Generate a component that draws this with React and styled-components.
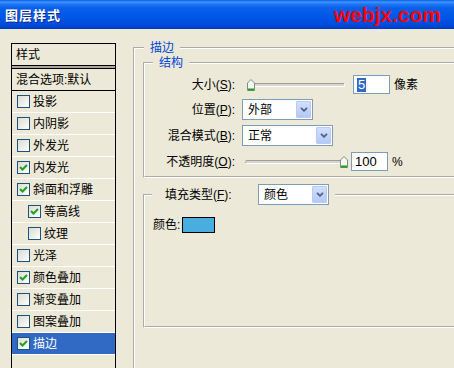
import React from 'react';
import styled, { createGlobalStyle } from 'styled-components';

const GlobalStyle = createGlobalStyle`
  html, body {
    margin: 0;
    padding: 0;
    width: 454px;
    height: 368px;
    overflow: hidden;
    background: #ECE9D8;
  }
  body {
    font-family: "Liberation Sans", "Noto Sans CJK SC", sans-serif;
    font-size: 12px;
    color: #000;
  }
`;

const Window = styled.div`
  width: 454px;
  height: 368px;
  display: flex;
  flex-direction: column;
  background: #ECE9D8;
  overflow: hidden;
`;

const TitleBar = styled.div`
  height: 29px;
  flex: none;
  display: flex;
  align-items: center;
  justify-content: space-between;
  padding: 0 13px 0 5px;
  background: linear-gradient(#0A5DE8 0, #3D95FF 2px, #2277F4 4px, #0860EA 8px, #0055E5 18px, #004BDA 25px, #003AC2 29px);
`;

const Title = styled.div`
  color: #fff;
  font: bold 13px "Noto Sans CJK SC", sans-serif;
  line-height: 16px;
  text-shadow: 1px 1px 0 #0B2A8C;
  letter-spacing: 1px;
`;

const Brand = styled.div`
  color: #FF0000;
  font: bold 21px "Liberation Sans", Arial, sans-serif;
  line-height: 24px;
  margin-top: 1px;
`;

const Body = styled.div`
  flex: 1;
  min-height: 0;
  display: flex;
  align-items: flex-start;
  padding: 14px 0 0 11px;
  gap: 17px;
`;

/* left style list */
const StyleList = styled.div`
  width: 105px;
  flex: none;
  align-self: stretch;
  box-sizing: border-box;
  border: 1px solid #000;
  border-bottom: none;
`;

const ListHeader = styled.div`
  height: 21px;
  display: flex;
  align-items: center;
  padding-left: 4px;
  line-height: 14px;
  border-bottom: ${p => (p.$closed ? '1px solid #000' : 'none')};
`;

const HeaderRule = styled.div`
  height: 2px;
  background: #ACA899;
  border-top: 1px solid #000;
  border-bottom: 1px solid #000;
`;

const Row = styled.div`
  height: 21px;
  display: flex;
  align-items: center;
  gap: 3px;
  padding-left: ${p => (p.$indent ? 16 : 5)}px;
  border-bottom: 1px solid #fff;
  line-height: 14px;
  background: ${p => (p.$selected ? '#316AC5' : 'transparent')};
  color: ${p => (p.$selected ? '#fff' : '#000')};
`;

const Box = styled.span`
  width: 13px;
  height: 13px;
  box-sizing: border-box;
  border: 1px solid #1C5180;
  background: linear-gradient(135deg, #DCDCD5 0%, #F4F4F0 70%, #fff 100%);
  display: flex;
  align-items: center;
  justify-content: center;
  flex: none;
`;

const Check = ({ on }) => (
  <Box>
    {on && (
      <svg width="9" height="9" viewBox="0 0 9 9">
        <path d="M1 4 L3.5 6.5 L8 2" fill="none" stroke="#21A121" strokeWidth="2" />
      </svg>
    )}
  </Box>
);

/* right panel */
const Group = styled.fieldset`
  margin: ${p => p.$margin || 0};
  padding: ${p => p.$pad || 0};
  border: 2px groove #fff;
  min-width: 0;
  width: ${p => p.$w}px;
  box-sizing: border-box;
  flex: none;
`;

const Legend = styled.legend`
  color: ${p => p.$color || '#0046D5'};
  padding: 0 6px;
  margin-left: ${p => p.$ml}px;
  line-height: 14px;
  display: ${p => (p.$flex ? 'flex' : 'block')};
  align-items: center;
`;

const Rows = styled.div`
  display: flex;
  flex-direction: column;
  gap: 5px;
  padding: 5px 0 5px;
`;

const FormRow = styled.div`
  display: flex;
  align-items: center;
  height: ${p => p.$h}px;
  margin-top: ${p => p.$mt || 0}px;
`;

const Label = styled.div`
  width: 90px;
  text-align: right;
  margin-right: 7px;
  white-space: nowrap;
  line-height: 14px;
`;

const SliderWrap = styled.div`
  position: relative;
  width: 98px;
  height: 19px;
  margin-left: ${p => p.$ml}px;
  display: flex;
  align-items: center;
`;

const Track = styled.div`
  width: 100%;
  height: 2px;
  border-radius: 2px;
  border-top: 1px solid #9D9D9D;
  border-bottom: 1px solid #fff;
  border-left: 1px solid #B5B5B5;
  border-right: 1px solid #fff;
  background: #D8D5CC;
`;

const Thumb = styled.svg`
  position: absolute;
  top: 4px;
`;

const Slider = ({ at, ml }) => (
  <SliderWrap $ml={ml}>
    <Track />
    <Thumb width="8" height="12" viewBox="0 0 8 12" style={{ left: at }}>
      <path d="M0.5 4 L4 0.5 L7.5 4 V11.5 H0.5 Z" fill="#F6F6F2" stroke="#7E8E82" />
      <path d="M1 10.5 H7" stroke="#21A121" strokeWidth="2" />
    </Thumb>
  </SliderWrap>
);

const Input = styled.div`
  width: 37px;
  height: 19px;
  box-sizing: border-box;
  margin-left: 8px;
  border: 1px solid #7F9DB9;
  background: #fff;
  display: flex;
  align-items: center;
  padding-left: 3px;
  font-size: 13px;
`;

const Selected = styled.span`
  background: #316AC5;
  color: #fff;
  line-height: 14px;
  padding: 0 1px;
`;

const Unit = styled.span`
  margin-left: 4px;
  line-height: 14px;
`;

const SelectBox = styled.div`
  width: ${p => p.$w}px;
  height: 21px;
  box-sizing: border-box;
  border: 1px solid #7F9DB9;
  background: #fff;
  display: flex;
  align-items: center;
  padding-left: 5px;
  color: #000;
  line-height: 14px;
`;

const ArrowBtn = styled.span`
  margin-left: auto;
  margin-right: 1px;
  width: 15px;
  height: 17px;
  box-sizing: border-box;
  border: 1px solid #B9CBF5;
  border-radius: 1px;
  background: linear-gradient(#D2DFFC, #B4C9F6);
  display: flex;
  align-items: center;
  justify-content: center;
`;

const Select = ({ w, children }) => (
  <SelectBox $w={w}>
    {children}
    <ArrowBtn>
      <svg width="8" height="5" viewBox="0 0 8 5">
        <path d="M1 0.8 L4 3.8 L7 0.8" fill="none" stroke="#4D6185" strokeWidth="1.8" />
      </svg>
    </ArrowBtn>
  </SelectBox>
);

const FillLabel = styled.span`
  width: 93px;
  padding-left: 7px;
  color: #000;
  white-space: nowrap;
`;

const FillBody = styled.div`
  height: 121px;
  padding: 12px 0 0 8px;
  box-sizing: border-box;
  display: flex;
  align-items: flex-start;
  gap: 2px;
`;

const ColorLabel = styled.span`
  line-height: 16px;
`;

const Swatch = styled.div`
  width: 33px;
  height: 16px;
  box-sizing: border-box;
  border: 1px solid #000;
  background: ${p => p.$color};
`;

const effects = [
  { name: '投影', on: false },
  { name: '内阴影', on: false },
  { name: '外发光', on: false },
  { name: '内发光', on: true },
  { name: '斜面和浮雕', on: true },
  { name: '等高线', on: true, indent: true },
  { name: '纹理', on: false, indent: true },
  { name: '光泽', on: false },
  { name: '颜色叠加', on: true },
  { name: '渐变叠加', on: false },
  { name: '图案叠加', on: false },
  { name: '描边', on: true, selected: true },
];

export default function App() {
  return (
    <Window>
      <GlobalStyle />
      <TitleBar>
        <Title>图层样式</Title>
        <Brand>webjx.com</Brand>
      </TitleBar>
      <Body>
        <StyleList>
          <ListHeader>样式</ListHeader>
          <HeaderRule />
          <ListHeader $closed>混合选项:默认</ListHeader>
          {effects.map(e => (
            <Row key={e.name} $indent={e.indent} $selected={e.selected}>
              <Check on={e.on} />
              {e.name}
            </Row>
          ))}
        </StyleList>

        <Group $w={340} $margin="-2px 0 0 0" $pad="1px 0 0 8px" style={{ height: 400 }}>
          <Legend $ml={1}>描边</Legend>
          <Group $w={330}>
            <Legend $ml={8}>结构</Legend>
            <Rows>
              <FormRow $h={19}>
                <Label>大小(<u>S</u>):</Label>
                <Slider at={0} ml={5} />
                <Input><Selected>5</Selected></Input>
                <Unit>像素</Unit>
              </FormRow>
              <FormRow $h={21}>
                <Label>位置(<u>P</u>):</Label>
                <Select w={71}>外部</Select>
              </FormRow>
              <FormRow $h={21}>
                <Label>混合模式(<u>B</u>):</Label>
                <Select w={91}>正常</Select>
              </FormRow>
              <FormRow $h={19} $mt={1}>
                <Label>不透明度(<u>O</u>):</Label>
                <Slider at={95} ml={3} />
                <Input>100</Input>
                <Unit>%</Unit>
              </FormRow>
            </Rows>
          </Group>
          <Group $w={330} $margin="6px 0 0 0">
            <Legend $ml={7} $flex $color="#000">
              <FillLabel>填充类型(<u>F</u>):</FillLabel>
              <Select w={71}>颜色</Select>
            </Legend>
            <FillBody>
              <ColorLabel>颜色:</ColorLabel>
              <Swatch $color="#4AADE0" />
            </FillBody>
          </Group>
        </Group>
      </Body>
    </Window>
  );
}
